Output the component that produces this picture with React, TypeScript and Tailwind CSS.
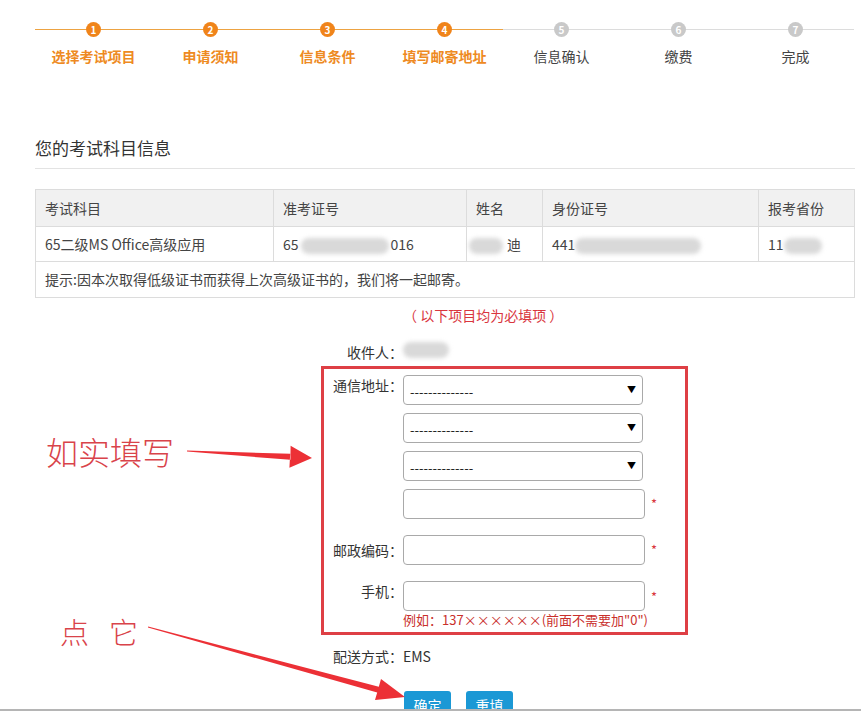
import React from "react";

const steps = [
  { n: 1, label: "选择考试项目" },
  { n: 2, label: "申请须知" },
  { n: 3, label: "信息条件" },
  { n: 4, label: "填写邮寄地址" },
  { n: 5, label: "信息确认" },
  { n: 6, label: "缴费" },
  { n: 7, label: "完成" },
];
const current = 4;

function Blur({ w, className = "" }: { w: string; className?: string }) {
  return <span className={`inline-block h-[16px] ${w} rounded-full bg-[#d9d9d9] blur-[2px] align-middle ${className}`} />;
}

function FakeSelect() {
  return (
    <div className="flex h-[30px] w-[240px] items-center justify-between rounded-[4px] border border-[#a9a9a9] bg-white pl-[6px] pr-[6px] text-[13px] text-[#222]">
      <span className="pt-[3px]">--------------</span>
      <span className="text-[9px] text-black">▼</span>
    </div>
  );
}

function TextBox() {
  return <div className="h-[30px] w-[242px] rounded-[4px] border border-[#a9a9a9] bg-white" />;
}

export default function App() {
  return (
    <div
      className="relative h-[714px] w-[861px] overflow-hidden bg-white text-[14px] text-[#333]"
      style={{ fontFamily: '"Noto Sans CJK SC", "Noto Sans", sans-serif' }}
    >
      <div className="h-[711px] overflow-hidden border-b-2 border-[#b5b5b5]">
        <div className="ml-[35px] w-[820px]">
          {/* Steps */}
          <div className="flex pt-[22px]">
            {steps.map((s) => {
              const done = s.n <= current;
              return (
                <div key={s.n} className="flex w-[117px] flex-col items-center">
                  <div className="relative flex h-[15px] w-full items-center justify-center">
                    <div className={`absolute left-0 right-0 top-[7px] h-px ${done ? "bg-[#eda342]" : "bg-[#dcdcdc]"}`} />
                    <div
                      className={`relative flex h-[15px] w-[15px] items-center justify-center rounded-full text-[10px] font-bold leading-none text-white ${
                        done ? "bg-[#f0841a]" : "bg-[#c9c9c9]"
                      }`}
                    >
                      {s.n}
                    </div>
                  </div>
                  <div
                    className={`mt-[9px] text-[14px] leading-[20px] ${
                      done ? "font-bold text-[#ee8a22]" : "text-[#444]"
                    }`}
                  >
                    {s.label}
                  </div>
                </div>
              );
            })}
          </div>

          {/* Title */}
          <div className="mt-[70px] border-b border-[#e3e3e3] pb-[8px] text-[17px] leading-[24px] text-[#333]">
            您的考试科目信息
          </div>

          {/* Table */}
          <table className="mt-[20px] w-[820px] border-collapse text-[14px] text-[#444]">
            <tbody>
              <tr className="h-[37px] bg-[#f1f1f1]">
                <td className="w-[238px] border border-[#dcdcdc] pl-[9px]">考试科目</td>
                <td className="w-[193px] border border-[#dcdcdc] pl-[9px]">准考证号</td>
                <td className="w-[76px] border border-[#dcdcdc] pl-[9px]">姓名</td>
                <td className="w-[216px] border border-[#dcdcdc] pl-[9px]">身份证号</td>
                <td className="border border-[#dcdcdc] pl-[9px]">报考省份</td>
              </tr>
              <tr className="h-[35px]">
                <td className="border border-[#dcdcdc] pl-[9px]">65二级MS Office高级应用</td>
                <td className="border border-[#dcdcdc] pl-[9px]">
                  65<Blur w="w-[88px]" className="mx-[2px]" />016
                </td>
                <td className="border border-[#dcdcdc] pl-[2px]">
                  <Blur w="w-[34px]" className="mr-[4px]" />迪
                </td>
                <td className="border border-[#dcdcdc] pl-[9px]">
                  441<Blur w="w-[126px]" />
                </td>
                <td className="border border-[#dcdcdc] pl-[9px]">
                  11<Blur w="w-[38px]" />
                </td>
              </tr>
              <tr className="h-[36px]">
                <td colSpan={5} className="border border-[#dcdcdc] pl-[9px]">
                  提示:因本次取得低级证书而获得上次高级证书的，我们将一起邮寄。
                </td>
              </tr>
            </tbody>
          </table>

          {/* Form */}
          <div className="ml-[368px] mt-[7px] leading-[20px] text-[#d9363e]">（ 以下项目均为必填项 ）</div>

          <div className="ml-[289px] mt-[17px] flex leading-[20px]">
            <div className="w-[79px] text-right">收件人：</div>
            <Blur w="w-[46px]" />
          </div>

          <div className="ml-[286px] mt-[4px] w-[367px] border-[3px] border-[#de3f45] pb-[3px] pt-[6px]">
            <div className="flex">
              <div className="w-[79px] pt-[0px] text-right leading-[20px]">通信地址：</div>
              <div className="flex flex-col gap-[8px]">
                <FakeSelect />
                <FakeSelect />
                <FakeSelect />
                <div className="flex items-start">
                  <TextBox />
                  <span className="ml-[6px] mt-[5px] text-[13px] text-[#d9363e]">*</span>
                </div>
              </div>
            </div>
            <div className="mt-[16px] flex items-center">
              <div className="w-[79px] text-right leading-[20px]">邮政编码：</div>
              <TextBox />
              <span className="ml-[6px] text-[13px] text-[#d9363e]">*</span>
            </div>
            <div className="mt-[16px] flex">
              <div className="w-[79px] text-right leading-[20px]">手机：</div>
              <div className="flex flex-col">
                <div className="flex items-center">
                  <TextBox />
                  <span className="ml-[6px] mt-[2px] text-[13px] text-[#d9363e]">*</span>
                </div>
                <div className="text-[13px] leading-[18px] text-[#c9302c]">例如：137××××××(前面不需要加"0")</div>
              </div>
            </div>
          </div>

          <div className="ml-[289px] mt-[11px] flex leading-[20px]">
            <div className="w-[79px] text-right">配送方式：</div>
            <span>EMS</span>
          </div>

          <div className="ml-[369px] mt-[25px] flex gap-[15px]">
            <button className="h-[30px] w-[47px] rounded-[3px] bg-[#1b98d5] pb-[2px] text-[14px] leading-[18px] text-white">确定</button>
            <button className="h-[30px] w-[47px] rounded-[3px] bg-[#1b98d5] pb-[2px] text-[14px] leading-[18px] text-white">重填</button>
          </div>
        </div>
      </div>

      {/* Annotations */}
      <div className="absolute left-[46px] top-[432px] text-[32px] font-light leading-[38px] text-[#d9434a]">如实填写</div>
      <div className="absolute left-[60px] top-[614px] flex gap-[20px] text-[29px] font-light leading-[34px] text-[#d9434a]">
        <span>点</span>
        <span>它</span>
      </div>
      <svg className="pointer-events-none absolute left-0 top-0" width="861" height="714">
        <polygon
          fill="#ec3036"
          points="187,450.5 290.2,453.8 289.4,467.8 312,458 290.6,445.8 290.4,459.8 187,451.5"
        />
        <polygon
          fill="#ec3036"
          points="148.1,626.5 378.8,686.7 381,679 405,697 375,700 377.2,692.5 147.9,627.5"
        />
      </svg>
    </div>
  );
}
